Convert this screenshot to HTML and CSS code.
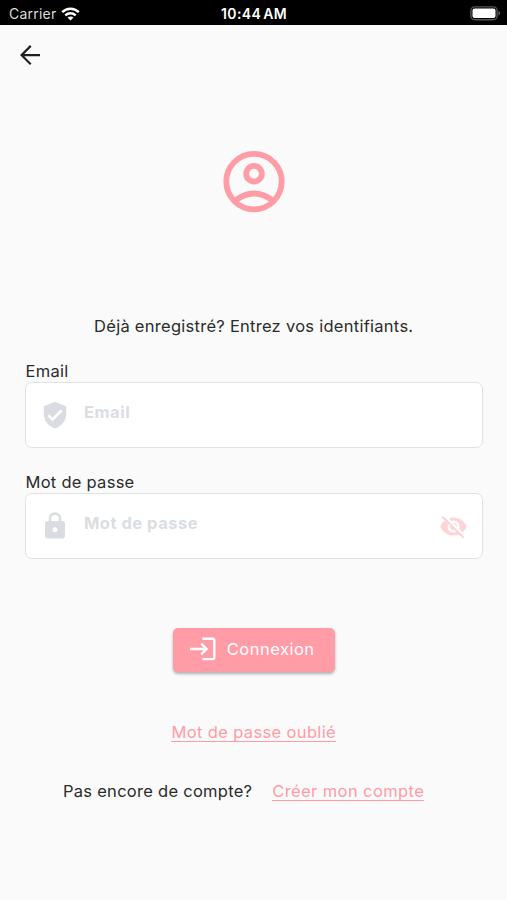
FILE: index.html
```html
<!DOCTYPE html>
<html lang="fr">
<head>
<meta charset="utf-8">
<title>Connexion</title>
<link rel="stylesheet" href="styles.css">
</head>
<body>
<div class="status">
  <div class="carrier"><span>Carrier</span>
    <svg width="19" height="14" viewBox="0 0 19 14" fill="none" stroke="#fff" stroke-width="2.5"><path d="M1.2 5.2C5.9.6 13.1.6 17.8 5.2M4.3 8.3c3-2.8 7.4-2.8 10.4 0"/><path d="M9.5 13.6 6.5 10.6c1.7-1.5 4.3-1.5 6 0z" fill="#fff" stroke="none"/></svg>
  </div>
  <span class="time">10:44 AM</span>
  <svg class="battery" width="31" height="15" viewBox="0 0 31 15"><rect x=".9" y=".9" width="26.2" height="12.8" rx="3.8" fill="none" stroke="#555" stroke-width="1.4"/><rect x="2.5" y="2.5" width="23" height="9.6" rx="2" fill="#fff"/><path d="M28.5 5v4.6c2.2-.6 2.2-4 0-4.6z" fill="#666"/></svg>
</div>
<header class="nav">
  <svg width="20" height="20" viewBox="4 4 16 16" fill="#1f1f1f"><path d="M20 11.1H7.4l5.8-5.8L12 4l-8 8 8 8 1.2-1.3-5.8-5.8H20z"/></svg>
</header>
<main>
  <svg class="avatar" width="62" height="62" viewBox="0 .4 62 62" fill="none" stroke="#ff9ca6" stroke-width="5.8"><circle cx="31" cy="31" r="27.7"/><circle cx="31" cy="23.1" r="7.8"/><path d="M11.5 50.5Q31 35.500 50.5 50.5"/></svg>
  <p class="intro">Déjà enregistré? Entrez vos identifiants.</p>
  <div class="group">
    <div class="label">Email</div>
    <div class="field">
      <svg width="30" height="30" viewBox="0 0 24 24" fill="#dadce1"><path d="M12 1.3 3 5v6c0 5.55 3.84 10.3 9 11.6 5.16-1.3 9-6.05 9-11.6V5l-9-3.7zm-2 15.7-4-4 1.41-1.41L10 14.17l6.59-6.59L18 9l-8 8z"/></svg>
      <span class="hint">Email</span>
    </div>
  </div>
  <div class="group">
    <div class="label">Mot de passe</div>
    <div class="field">
      <svg width="30" height="30" viewBox="0 0 24 24" fill="#dadce1"><path d="M18 8h-1V6c0-2.76-2.24-5-5-5S7 3.24 7 6v2H6c-1.1 0-2 .9-2 2v10c0 1.1.9 2 2 2h12c1.1 0 2-.9 2-2V10c0-1.1-.9-2-2-2zm-6 9c-1.1 0-2-.9-2-2s.9-2 2-2 2 .9 2 2-.9 2-2 2zm3.1-9H8.9V6c0-1.71 1.39-3.1 3.1-3.1s3.1 1.39 3.1 3.1v2z"/></svg>
      <span class="hint">Mot de passe</span>
      <svg class="eye" width="29" height="29" viewBox="0 0 24 24" fill="#ffd3d7"><path d="M12 7c2.76 0 5 2.24 5 5 0 .65-.13 1.26-.36 1.83l2.92 2.92c1.51-1.26 2.7-2.89 3.43-4.75-1.73-4.39-6-7.5-11-7.5-1.4 0-2.74.25-3.98.7l2.16 2.16C10.74 7.13 11.35 7 12 7zM2 4.27l2.28 2.28.46.46C3.08 8.3 1.78 10.02 1 12c1.73 4.39 6 7.5 11 7.5 1.55 0 3.03-.3 4.38-.84l.42.42L19.73 22 21 20.73 3.27 3 2 4.27zM7.53 9.8l1.55 1.55c-.05.21-.08.43-.08.65 0 1.66 1.34 3 3 3 .22 0 .44-.03.65-.08l1.55 1.55c-.67.33-1.41.53-2.2.53-2.76 0-5-2.24-5-5 0-.79.2-1.53.53-2.2zm4.31-.78 3.15 3.15.02-.16c0-1.66-1.34-3-3-3l-.17.01z"/></svg>
    </div>
  </div>
  <div class="button">
    <svg width="26" height="24" viewBox="0 0 26 24" fill="none" stroke="#fff" stroke-width="2.4"><path d="M12.5 1.7h10.2q1.6 0 1.6 1.6v17.2q0 1.6-1.6 1.6H12.500M0 12h16M11.2 6.6l5.4 5.4-5.4 5.4"/></svg>
    <span>Connexion</span>
  </div>
  <a class="link forgot">Mot de passe oublié</a>
  <div class="signup"><span>Pas encore de compte?</span><a class="link create">Créer mon compte</a></div>
</main>
</body>
</html>
```
FILE: styles.css
```css
* { box-sizing: border-box; }
body { margin: 0; height: 900px; background: #fafafa; color: #2b2b2b; font: 16.5px/20px Inter, sans-serif; letter-spacing: .27px; overflow: hidden; white-space: nowrap; }
svg { display: block; flex: none; }
.status { height: 25px; background: #000; color: #fff; display: grid; grid-template-columns: 1fr auto 1fr; align-items: center; padding: 2px 6px 0 9px; font-size: 14px; }
.carrier { display: flex; align-items: center; gap: 5px; color: #ddd; letter-spacing: .22px; }
.time { font-weight: 600; font-size: 14px; letter-spacing: .4px; word-spacing: -2px; margin-right: 2px; }
.battery { justify-self: end; }
.nav { height: 60px; padding: 20px; }
main { display: flex; flex-direction: column; align-items: center; padding: 0 24.5px 0 25px; }
.avatar { margin-top: 66px; }
.intro { margin: 103px 0 0; }
.group { width: 100%; margin-top: 25px; }
.group + .group { margin-top: 24px; }
.label { height: 21px; padding-left: .5px; }
.field { height: 66px; border: 1.5px solid #e2e2e4; border-radius: 7px; background: #fff; display: flex; align-items: center; padding: 0 14px; }
.hint { color: #dadde1; font-weight: 700; margin: -6px 0 0 14px; letter-spacing: .5px; }
.eye { margin-left: auto; }
.button { width: 162px; height: 44px; margin-top: 69px; background: #ff9ca6; border-radius: 5px; box-shadow: 0 2px 3px rgba(0,0,0,.3); color: #fff; display: flex; align-items: center; gap: 11px; padding: 0 0 2px 17px; letter-spacing: .5px; }
.link { color: #ff9ca6; border-bottom: 1.5px solid #ff9ca6; height: 20px; letter-spacing: .36px; }
.forgot { margin-top: 50px; }
.create { letter-spacing: .4px; }
.signup { display: flex; gap: 20px; margin-top: 39px; align-self: flex-start; margin-left: 38px; }
```
